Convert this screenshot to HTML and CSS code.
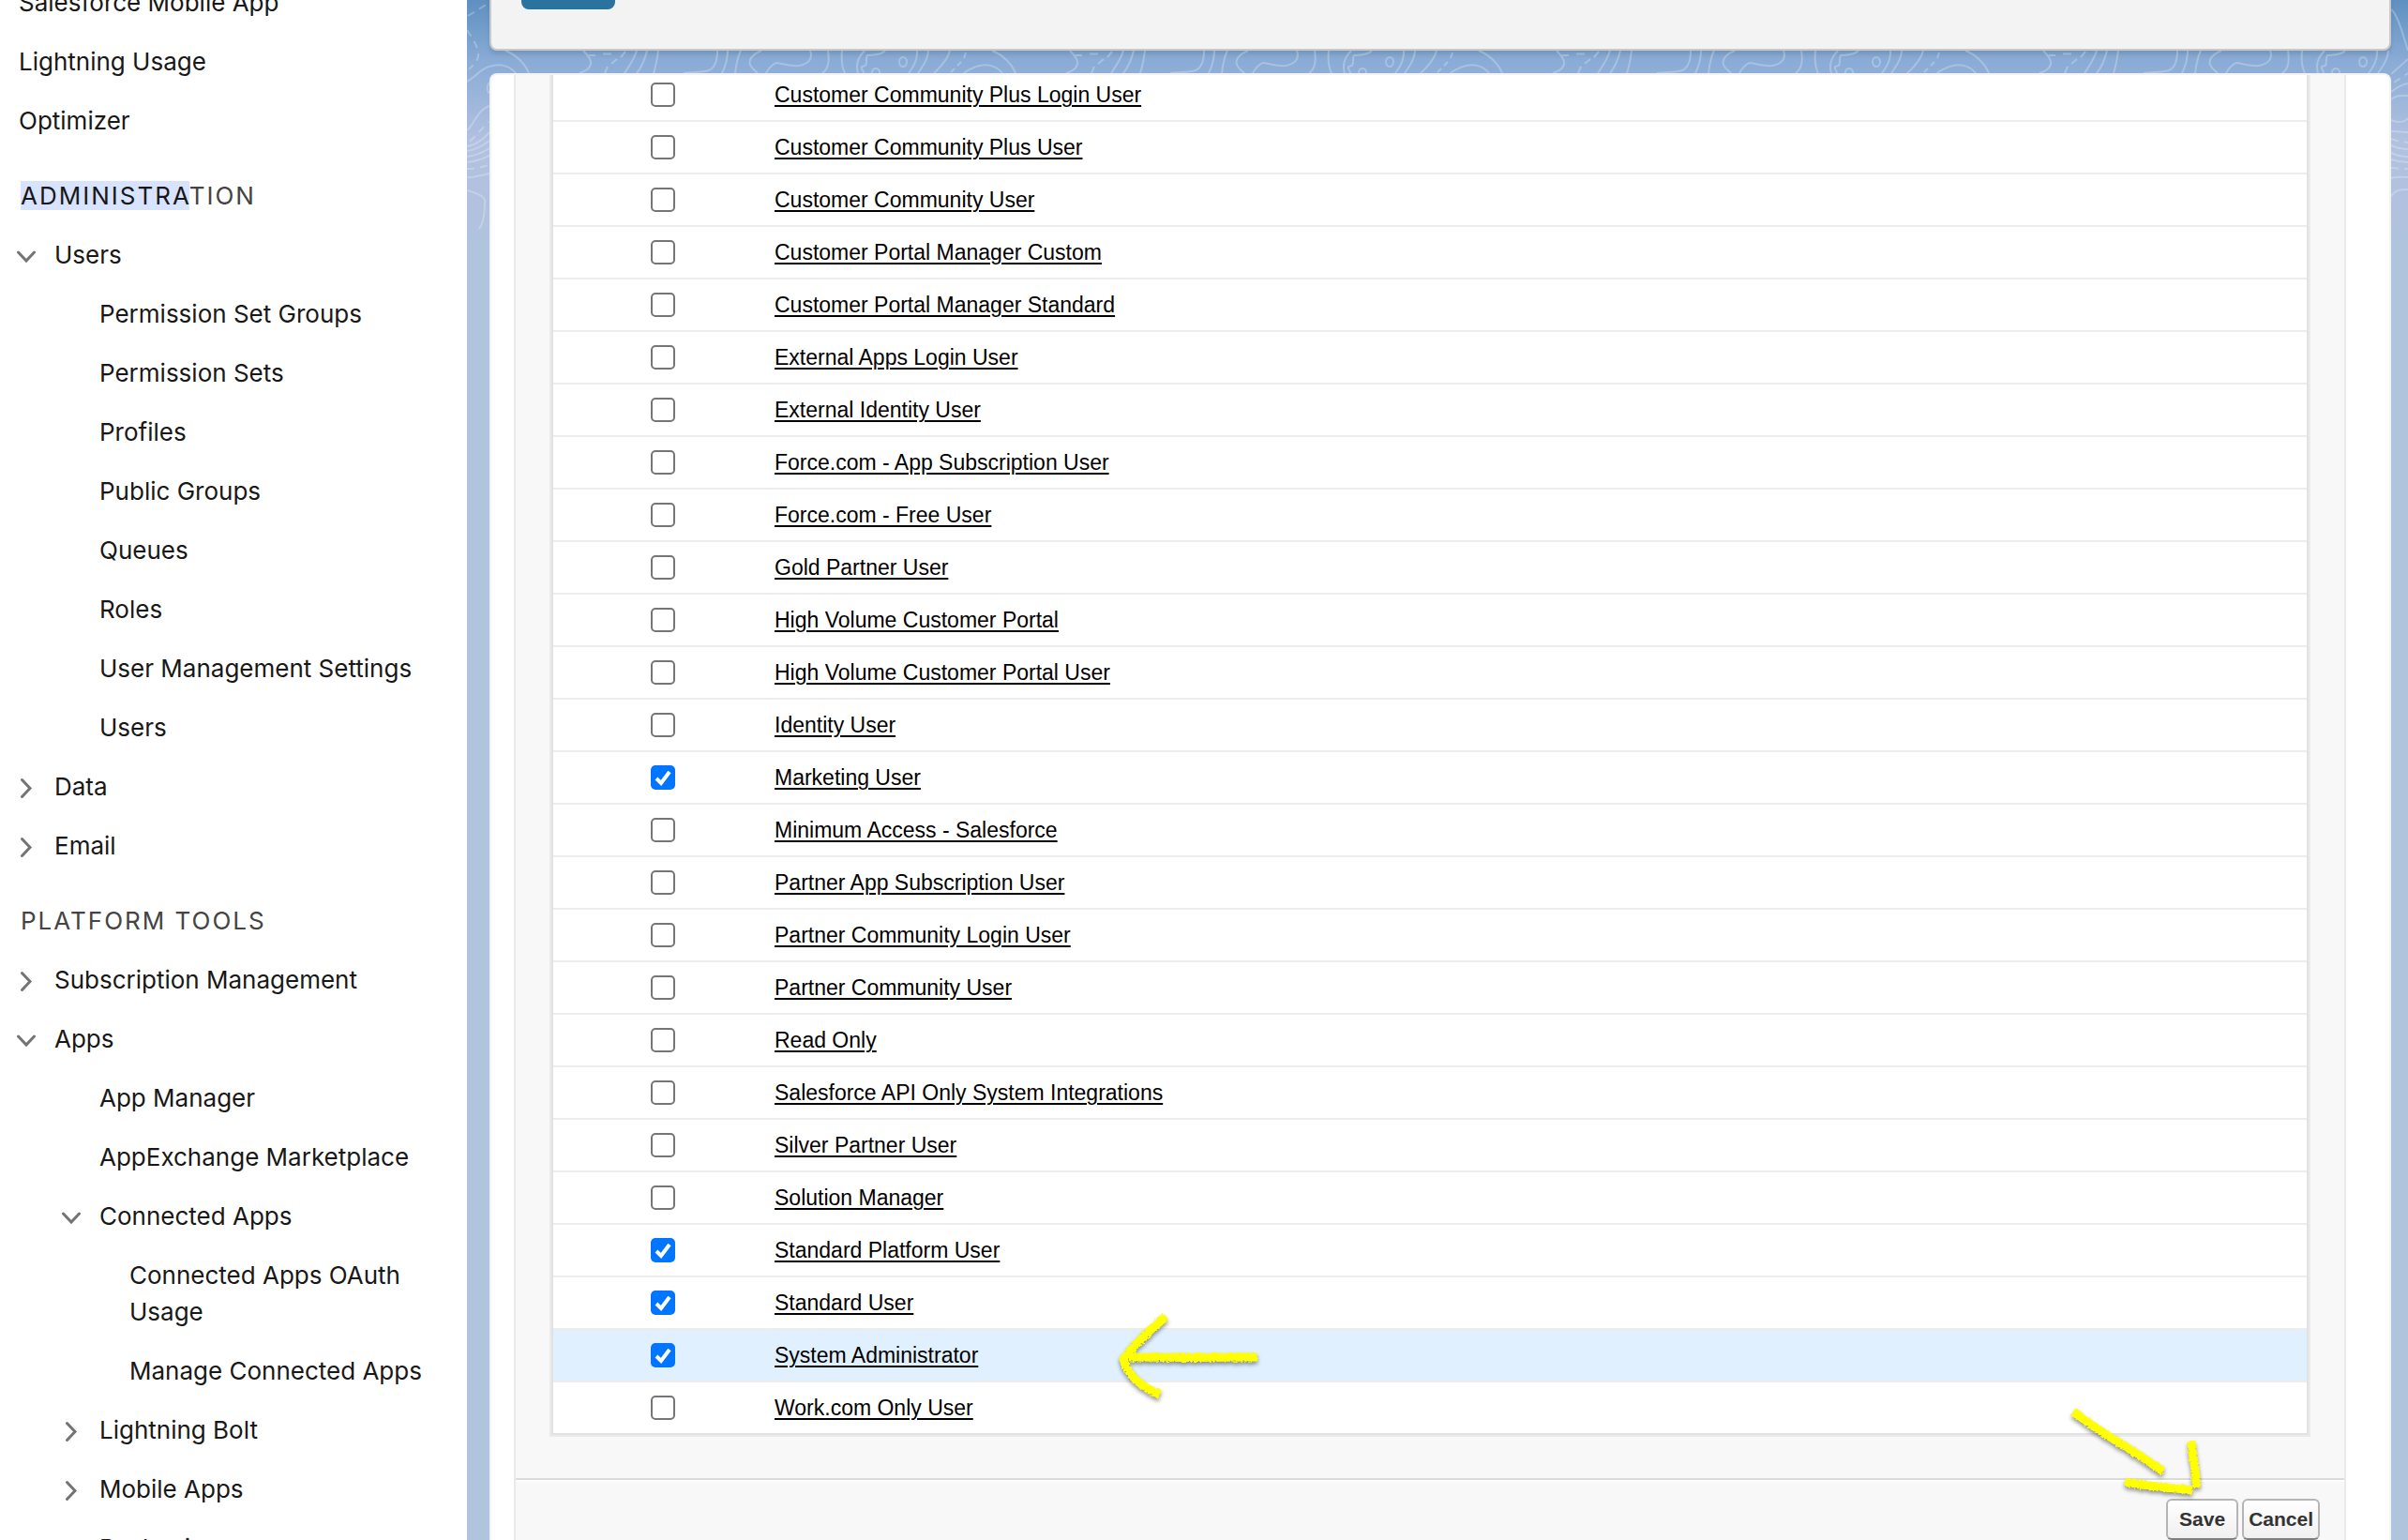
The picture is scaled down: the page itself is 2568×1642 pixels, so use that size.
FILE: index.html
```html
<!DOCTYPE html>
<html lang="en">
<head>
<meta charset="utf-8">
<title>Setup</title>
<link rel="stylesheet" href="styles.css">
</head>
<body>
<svg class="defs" width="0" height="0" aria-hidden="true">
  <defs>
    <symbol id="down" viewBox="0 0 20 24"><path d="M1.5 9 10 18 18.500 9"/></symbol>
    <symbol id="right" viewBox="0 0 20 24"><path d="M5.500 4.500 14 13.500 5.500 22.500"/></symbol>
    <filter id="chalk" x="-20%" y="-20%" width="140%" height="140%">
      <feTurbulence type="fractalNoise" baseFrequency="0.5" numOctaves="2" seed="4"/>
      <feDisplacementMap in="SourceGraphic" scale="6" xChannelSelector="R" yChannelSelector="G"/>
    </filter>
  </defs>
</svg>
<div class="app">
  <nav class="sidebar" aria-label="Setup">
    <ul class="tree">
      <li><a class="item top" href="#">Salesforce Mobile App</a></li>
      <li><a class="item top" href="#">Lightning Usage</a></li>
      <li><a class="item top" href="#">Optimizer</a></li>
    </ul>
    <h2 class="section"><mark>ADMINISTRA</mark>TION</h2>
    <ul class="tree">
      <li>
        <div class="item branch"><button class="toggle" aria-label="Collapse Users"><svg><use href="#down"/></svg></button><a href="#">Users</a></div>
        <ul class="tree">
          <li><a class="item leaf" href="#">Permission Set Groups</a></li>
          <li><a class="item leaf" href="#">Permission Sets</a></li>
          <li><a class="item leaf" href="#">Profiles</a></li>
          <li><a class="item leaf" href="#">Public Groups</a></li>
          <li><a class="item leaf" href="#">Queues</a></li>
          <li><a class="item leaf" href="#">Roles</a></li>
          <li><a class="item leaf" href="#">User Management Settings</a></li>
          <li><a class="item leaf" href="#">Users</a></li>
        </ul>
      </li>
      <li><div class="item branch"><button class="toggle" aria-label="Expand Data"><svg><use href="#right"/></svg></button><a href="#">Data</a></div></li>
      <li><div class="item branch"><button class="toggle" aria-label="Expand Email"><svg><use href="#right"/></svg></button><a href="#">Email</a></div></li>
    </ul>
    <h2 class="section">PLATFORM TOOLS</h2>
    <ul class="tree">
      <li><div class="item branch"><button class="toggle" aria-label="Expand Subscription Management"><svg><use href="#right"/></svg></button><a href="#">Subscription Management</a></div></li>
      <li>
        <div class="item branch"><button class="toggle" aria-label="Collapse Apps"><svg><use href="#down"/></svg></button><a href="#">Apps</a></div>
        <ul class="tree">
          <li><a class="item leaf" href="#">App Manager</a></li>
          <li><a class="item leaf" href="#">AppExchange Marketplace</a></li>
          <li>
            <div class="item branch nested"><button class="toggle" aria-label="Collapse Connected Apps"><svg><use href="#down"/></svg></button><a href="#">Connected Apps</a></div>
            <ul class="tree">
              <li><a class="item deep" href="#">Connected Apps OAuth Usage</a></li>
              <li><a class="item deep" href="#">Manage Connected Apps</a></li>
            </ul>
          </li>
          <li><div class="item branch nested"><button class="toggle" aria-label="Expand Lightning Bolt"><svg><use href="#right"/></svg></button><a href="#">Lightning Bolt</a></div></li>
          <li><div class="item branch nested"><button class="toggle" aria-label="Expand Mobile Apps"><svg><use href="#right"/></svg></button><a href="#">Mobile Apps</a></div></li>
          <li><div class="item branch nested"><button class="toggle" aria-label="Expand Packaging"><svg><use href="#right"/></svg></button><a href="#">Packaging</a></div></li>
        </ul>
      </li>
    </ul>
  </nav>

  <main class="main">
    <svg class="contours gutter-left" width="24" height="260" aria-hidden="true">
      <path class="dash" d="M1 17 22 4M0 32C8 44 13 52 12 60 11 66 6 70 2 74M3 151 23 130M0 180C8 180 16 178 24 176"/>
      <path d="M0 87C8 83 16 72 24 71M24 88C20 92 22 98 24 99M0 139C7 134 11 117 24 113M0 156C9 155 16 150 24 141M0 161C9 160 16 156 24 150M0 167C9 166 16 163 24 158M0 173C9 172 16 170 24 166M0 189C8 189 16 187 24 185M0 203C14 207 20 210 19 216 19 230 16 240 13 244"/>
    </svg>
    <svg class="contours gutter-right" width="18" height="260" aria-hidden="true">
      <path class="dash" d="M3 88 18 78M0 148C6 151 12 151 18 152M0 179 18 180"/>
      <path d="M0 10C7 14 14 42 18 54M18 63 0 79M0 98C6 93 12 90 18 89M0 106C6 101 12 102 18 102M0 128C6 131 14 131 18 126M0 140 18 141M0 155C6 158 12 159 18 159M0 163C6 166 12 167 18 167M0 170C6 172 12 173 18 173M0 190C6 188 12 189 18 189M0 209C5 202 10 202 18 202"/>
    </svg>

    <section class="card page-header">
      <button class="primary" aria-label="Edit"></button>
    </section>

    <svg class="contours strip" aria-hidden="true">
      <defs>
        <pattern id="topo" width="519" height="24" patternUnits="userSpaceOnUse">
          <path d="M17 0C28 4 38 14 42 24M0 17C8 14 20 14 28 24M100 0C104 4 109 10 108 14 107 20 101 22 96 24M157 0C154 10 148 18 144 24M168 0C166 8 162 18 157 24M180 0C179 8 177 18 175 24M243 0C243 10 241 18 234 21 226 24 216 22 207 24M254 0C254 10 251 18 248 24M268 0C264 8 263 16 262 24M290 0C280 4 276 10 278 15 280 20 284 22 286 24M342 0C345 8 341 14 330 16 322 17 314 14 306 13 302 14 297 20 295 24M361 0C363 12 361 20 355 24M376 0C375 10 376 18 379 24M400 0C394 6 390 14 393 24M422 0C416 6 408 4 403 5 401 8 403 12 401 16L397 17C396 20 399 21 399 24M456 0C457 12 450 20 447 24M468 0C468 10 461 18 457 24M491 0C488 12 478 20 474 24M519 17C512 20 508 22 506 24"/>
          <path d="M106 5H113M121 3.500H130M145 1 140 7M136 9 130 14M126 17 123 24M508 2 506 8M503 12 499 16M496 19 492 23"/>
          <ellipse cx="441" cy="12" rx="4" ry="5"/>
          <ellipse cx="412" cy="23" rx="4" ry="4"/>
        </pattern>
      </defs>
      <rect width="100%" height="24" fill="url(#topo)" stroke="none"/>
    </svg>

    <section class="card content">
      <form class="panel">
        <div class="table-frame">
          <table class="profiles">
            <tbody>
              <tr><td><input type="checkbox" aria-labelledby="p1"></td><td><a id="p1" href="#">Customer Community Plus Login User</a></td></tr>
              <tr><td><input type="checkbox" aria-labelledby="p2"></td><td><a id="p2" href="#">Customer Community Plus User</a></td></tr>
              <tr><td><input type="checkbox" aria-labelledby="p3"></td><td><a id="p3" href="#">Customer Community User</a></td></tr>
              <tr><td><input type="checkbox" aria-labelledby="p4"></td><td><a id="p4" href="#">Customer Portal Manager Custom</a></td></tr>
              <tr><td><input type="checkbox" aria-labelledby="p5"></td><td><a id="p5" href="#">Customer Portal Manager Standard</a></td></tr>
              <tr><td><input type="checkbox" aria-labelledby="p6"></td><td><a id="p6" href="#">External Apps Login User</a></td></tr>
              <tr><td><input type="checkbox" aria-labelledby="p7"></td><td><a id="p7" href="#">External Identity User</a></td></tr>
              <tr><td><input type="checkbox" aria-labelledby="p8"></td><td><a id="p8" href="#">Force.com - App Subscription User</a></td></tr>
              <tr><td><input type="checkbox" aria-labelledby="p9"></td><td><a id="p9" href="#">Force.com - Free User</a></td></tr>
              <tr><td><input type="checkbox" aria-labelledby="p10"></td><td><a id="p10" href="#">Gold Partner User</a></td></tr>
              <tr><td><input type="checkbox" aria-labelledby="p11"></td><td><a id="p11" href="#">High Volume Customer Portal</a></td></tr>
              <tr><td><input type="checkbox" aria-labelledby="p12"></td><td><a id="p12" href="#">High Volume Customer Portal User</a></td></tr>
              <tr><td><input type="checkbox" aria-labelledby="p13"></td><td><a id="p13" href="#">Identity User</a></td></tr>
              <tr><td><input type="checkbox" aria-labelledby="p14" checked></td><td><a id="p14" href="#">Marketing User</a></td></tr>
              <tr><td><input type="checkbox" aria-labelledby="p15"></td><td><a id="p15" href="#">Minimum Access - Salesforce</a></td></tr>
              <tr><td><input type="checkbox" aria-labelledby="p16"></td><td><a id="p16" href="#">Partner App Subscription User</a></td></tr>
              <tr><td><input type="checkbox" aria-labelledby="p17"></td><td><a id="p17" href="#">Partner Community Login User</a></td></tr>
              <tr><td><input type="checkbox" aria-labelledby="p18"></td><td><a id="p18" href="#">Partner Community User</a></td></tr>
              <tr><td><input type="checkbox" aria-labelledby="p19"></td><td><a id="p19" href="#">Read Only</a></td></tr>
              <tr><td><input type="checkbox" aria-labelledby="p20"></td><td><a id="p20" href="#">Salesforce API Only System Integrations</a></td></tr>
              <tr><td><input type="checkbox" aria-labelledby="p21"></td><td><a id="p21" href="#">Silver Partner User</a></td></tr>
              <tr><td><input type="checkbox" aria-labelledby="p22"></td><td><a id="p22" href="#">Solution Manager</a></td></tr>
              <tr><td><input type="checkbox" aria-labelledby="p23" checked></td><td><a id="p23" href="#">Standard Platform User</a></td></tr>
              <tr><td><input type="checkbox" aria-labelledby="p24" checked></td><td><a id="p24" href="#">Standard User</a></td></tr>
              <tr class="highlight"><td><input type="checkbox" aria-labelledby="p25" checked></td><td class="anchor"><a id="p25" href="#">System Administrator</a>
                <svg class="arrow arrow-row" width="160" height="100" aria-hidden="true"><g filter="url(#chalk)"><path d="M53 6C36 20 20 36 8 51 12 68 26 80 47 89M14 49 80 49.500 151 49"/></g></svg></td></tr>
              <tr><td><input type="checkbox" aria-labelledby="p26"></td><td><a id="p26" href="#">Work.com Only User</a></td></tr>
            </tbody>
          </table>
        </div>
        <div class="actions">
          <button type="button" class="btn">Save</button>
          <button type="button" class="btn">Cancel</button>
          <svg class="arrow arrow-save" width="150" height="100" aria-hidden="true"><g filter="url(#chalk)"><path d="M11 7C40 30 72 46 107 71M137 39C138 56 143 72 142 88M66 82C90 87 116 88 138 91"/></g></svg>
        </div>
      </form>
    </section>
  </main>
</div>
</body>
</html>
```

FILE: styles.css
```css
* { box-sizing: border-box; }

body {
  margin: 0;
  background: #fff;
  font-family: "Liberation Sans", Arial, sans-serif;
}

.defs { position: absolute; }

.app {
  display: grid;
  grid-template-columns: 498px 1fr;
  height: 100vh;
  overflow: hidden;
}

/* Sidebar */
.sidebar {
  margin-top: -29px;
  padding-right: 24px;
  font: 400 26px/39px Inter, "Noto Sans", sans-serif;
  color: #181818;
}

.tree { list-style: none; margin: 0; padding: 0; }

.sidebar a { color: inherit; text-decoration: none; }

.item { display: block; padding: 12px 0; }
.top { padding-left: 20px; }
.leaf { padding-left: 106px; }
.deep { padding-left: 138px; }

.branch {
  display: flex;
  align-items: center;
  gap: 20px;
  padding-left: 18px;
}
.nested { padding-left: 66px; }

.toggle {
  display: flex;
  width: 20px;
  padding: 0;
  border: 0;
  background: none;
}
.toggle svg {
  width: 20px;
  height: 24px;
  fill: none;
  stroke: #747474;
  stroke-width: 3px;
  stroke-linecap: round;
  stroke-linejoin: miter;
}

.section {
  margin: 0;
  padding: 29px 0 12px 22px;
  font-size: 26px;
  font-weight: 400;
  letter-spacing: 2px;
  color: #444;
}
.section mark { background: #d8e4ff; color: #181818; }

/* Main area */
.main {
  position: relative;
  display: flex;
  flex-direction: column;
  padding: 0 18px 0 24px;
  min-width: 0;
  background: linear-gradient(#5e90c0 0, #89abd5 64px, #b1c1e0 150px, #b1c1df 220px, #b0c4de 260px);
}

.contours {
  fill: none;
  stroke: rgba(255, 255, 255, 0.25);
  stroke-width: 2px;
}
.dash { stroke-dasharray: 8 6; }
.gutter-left { position: absolute; top: 0; left: 0; }
.gutter-right { position: absolute; top: 0; right: 0; }
.strip { flex: none; width: 100%; height: 24px; }

.card { border: 2px solid #f3f3f3; background: #fff; }

.page-header {
  flex: none;
  margin-top: -44px;
  padding: 10px 32px 42px;
  border-color: #c9c9c9;
  border-radius: 8px;
  background: #f3f3f3;
  box-shadow: 0 4px 4px rgba(0, 0, 0, 0.1);
}
.primary {
  display: block;
  width: 100px;
  height: 42px;
  border: 0;
  border-radius: 8px;
  background: #2a739e;
}

.content {
  flex: 1;
  min-height: 0;
  padding: 0 46px 0 24px;
  border-bottom: 0;
  border-radius: 8px 8px 0 0;
  overflow: hidden;
}
.panel {
  margin-top: -10px;
  border: 2px solid #eaeaea;
  border-width: 0 2px;
  background: #f8f8f8;
}

.table-frame { margin: 0 36px 44px; border: 2px solid #ebebeb; }

.profiles {
  width: 100%;
  border: 2px solid #e2e2e2;
  border-spacing: 0;
  background: #fff;
  font-size: 23px;
  line-height: 28px;
}
.profiles td {
  height: 56px;
  padding: 0 0 0 2px;
  border-bottom: 2px solid #ececec;
  vertical-align: middle;
}
.profiles td:first-child { width: 234px; padding: 0; text-align: center; }
.profiles tr:last-child td { height: 54px; border-bottom: 0; }
.profiles a {
  color: #000;
  text-decoration-thickness: 2px;
  text-underline-offset: 3px;
}
.highlight { background: #e0f0fe; }

input[type="checkbox"] {
  display: block;
  appearance: none;
  width: 26px;
  height: 26px;
  margin: 0 auto;
  border: 2px solid #767676;
  border-radius: 5px;
  background: #fff;
}
input[type="checkbox"]:checked {
  border-color: #0075ff;
  background: #0075ff url('data:image/svg+xml,<svg xmlns="http://www.w3.org/2000/svg" viewBox="0 0 22 22"><path d="M4 12 9 17 18 5" fill="none" stroke="white" stroke-width="4"/></svg>') center / 22px no-repeat;
}

.actions {
  position: relative;
  display: flex;
  justify-content: flex-end;
  gap: 4px;
  padding: 20px 26px 24px;
  border-top: 2px solid #dbdbdb;
  box-shadow: inset 0 2px #fff;
}
.btn {
  height: 44px;
  padding: 0 5px;
  border: 2px solid #b5b5b5;
  border-bottom-color: #7f7f7f;
  border-radius: 6px;
  background: linear-gradient(#fff, #f0f0f0);
  color: #333;
  font: 700 21px/28px "Liberation Sans", Arial, sans-serif;
}
.btn:first-child { padding: 0 12px; }

/* Hand-drawn pointers */
.arrow {
  position: absolute;
  fill: none;
  stroke: #ff0;
  stroke-width: 9px;
  filter: drop-shadow(0 3px 2px rgba(0, 0, 0, 0.4));
}
.anchor { position: relative; }
.arrow-row { top: -20px; left: 366px; }
.arrow-save { top: -80px; right: 150px; }
```
